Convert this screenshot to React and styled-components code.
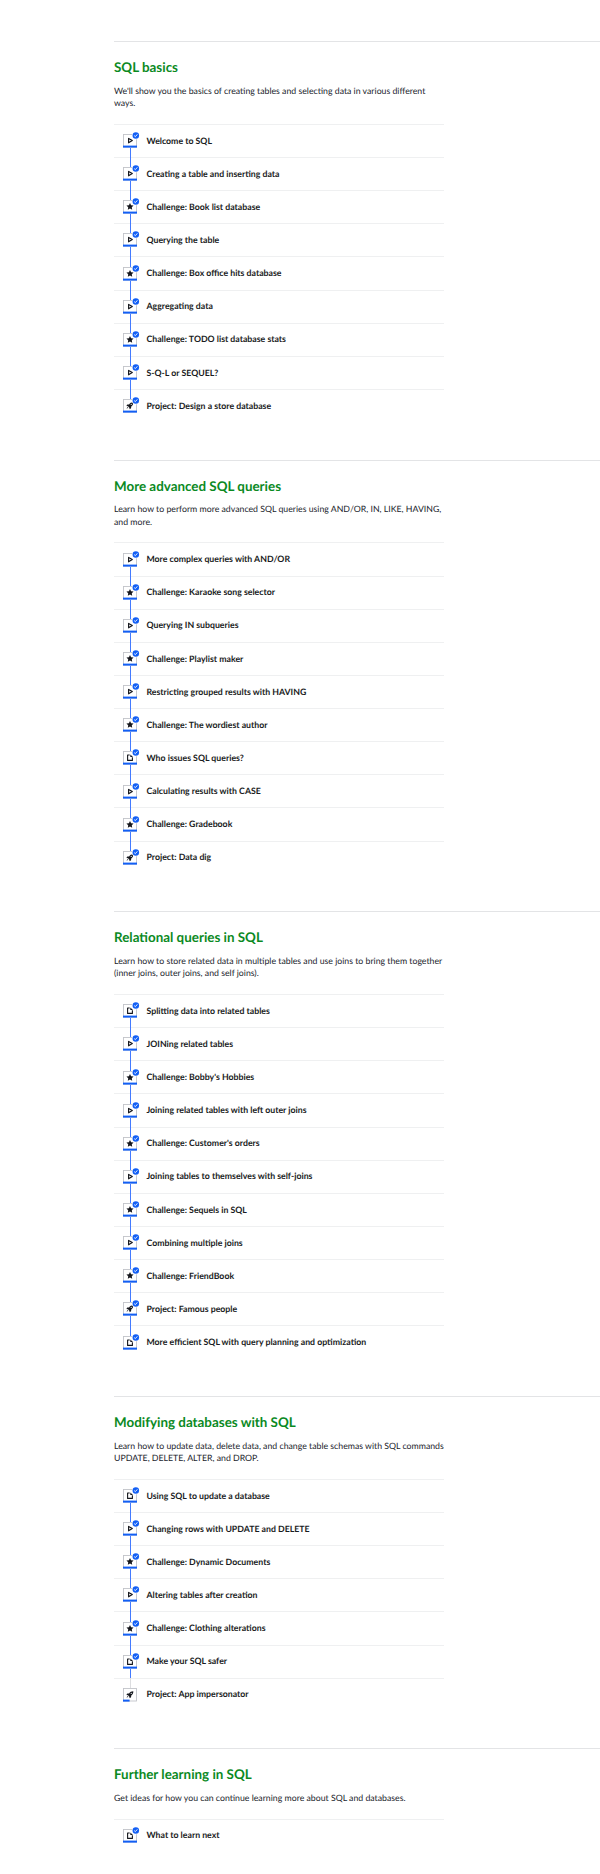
import React from 'react';
import styled, { createGlobalStyle } from 'styled-components';

const Global = createGlobalStyle`
  body {
    margin: 0;
    background: #fff;
    color: #21242c;
    font-family: Lato, 'Liberation Sans', sans-serif;
    text-rendering: geometricPrecision;
    overflow-x: hidden;
  }
`;

const Page = styled.main`
  padding: 41px 0 0 114px;
`;

const Unit = styled.section`
  box-sizing: border-box;
  border-top: 1px solid #e3e4e6;
  padding: 17px 0 37.5px;
`;

const UnitTitle = styled.h2`
  margin: 0;
  font-size: 13.4px;
  line-height: 16px;
  font-weight: 700;
  color: #0b8a1f;
`;

const Description = styled.p`
  box-sizing: border-box;
  width: 335px;
  margin: 0;
  padding: 9.6px 0 14px;
  font-size: 8.74px;
  line-height: 12.65px;
  white-space: pre-line;
`;

const Lessons = styled.ul`
  width: 330px;
  margin: 0;
  padding: 0;
  list-style: none;
`;

const Lesson = styled.li`
  box-sizing: border-box;
  display: flex;
  align-items: stretch;
  height: 33.13px;
  border-top: 1px solid #eff0f1;
  padding-left: 9.2px;
`;

const Track = styled.div`
  display: flex;
  flex-direction: column;
  align-items: center;
  width: 14px;
  margin-top: -1px;
`;

const Line = styled.span`
  width: 1px;
  flex: ${(p) => (p.$top ? '0 0 10.2px' : '1 1 0')};
  background: ${(p) => (p.$tone === 'done' ? '#437aff' : p.$tone === 'idle' ? '#dcdde0' : 'transparent')};
`;

const Tile = styled.svg`
  display: block;
  flex: none;
  width: 18px;
  height: 16px;
  margin: -2px 0 0 4px;
`;

const LessonName = styled.span`
  align-self: center;
  margin: -0.7px 0 0 9.3px;
  font-size: 8.74px;
  line-height: 12px;
  font-weight: 700;
  color: #191b22;
`;

const glyphs = {
  video: <path d="M5.600 6.400v4.400l3.700-2.200z" fill="none" stroke="#15171d" strokeWidth="1.15" strokeLinejoin="round" />,
  challenge: (
    <path
      d="M7 5l1.100 2.250 2.450.36-1.770 1.720.41 2.450L7 10.620l-2.190 1.160.41-2.450-1.770-1.720 2.450-.36z"
      fill="#15171d"
    />
  ),
  article: (
    <g fill="none" stroke="#15171d" strokeWidth="1.100">
      <path d="M6.700 6H4.600v5.400h4.800V8.300" strokeLinejoin="round" />
      <path d="M7.300 5.400l2.700 2.700H7.300z" fill="#15171d" stroke="none" />
    </g>
  ),
  project: (
    <g transform="translate(0 .3)">
      <path
        d="M10.300 4.900c-2.100 0-3.300.9-4.200 2.200l-1.800.2-.9 1.400 1.600.3 1.350 1.350.3 1.550 1.400-1.050.2-1.650C9.600 8.300 10.400 6.900 10.300 4.900z"
        fill="#15171d"
      />
      <path d="M4.600 9.700l-1.100 1.800 1.800-1.100z" fill="#15171d" />
      <circle cx="8.200" cy="7" r=".65" fill="#fff" />
    </g>
  ),
};

function LessonTile({ kind, done, partial }) {
  return (
    <Tile viewBox="0 0 18 16" aria-hidden="true">
      <rect x=".5" y="2.500" width="13" height="12.500" fill="#fff" stroke="#c2c4c9" strokeWidth=".9" />
      <rect x="0" y="13.600" width={partial ? 6.6 : 14} height="2" fill="#125ff5" />
      {glyphs[kind]}
      {done && (
        <g>
          <circle cx="12.800" cy="3.400" r="3.900" fill="#fff" />
          <circle cx="12.800" cy="3.400" r="3.250" fill="#125ff5" />
          <path d="M11.200 3.600l1.150 1.050 2-2.300" fill="none" stroke="#fff" strokeWidth=".9" />
        </g>
      )}
    </Tile>
  );
}

const V = 'video';
const C = 'challenge';
const A = 'article';
const P = 'project';

const units = [
  {
    title: 'SQL basics',
    text: "We'll show you the basics of creating tables and selecting data in various different\nways.",
    lessons: [
      [V, 'Welcome to SQL'],
      [V, 'Creating a table and inserting data'],
      [C, 'Challenge: Book list database'],
      [V, 'Querying the table'],
      [C, 'Challenge: Box office hits database'],
      [V, 'Aggregating data'],
      [C, 'Challenge: TODO list database stats'],
      [V, 'S-Q-L or SEQUEL?'],
      [P, 'Project: Design a store database'],
    ],
  },
  {
    title: 'More advanced SQL queries',
    text: 'Learn how to perform more advanced SQL queries using AND/OR, IN, LIKE, HAVING,\nand more.',
    lessons: [
      [V, 'More complex queries with AND/OR'],
      [C, 'Challenge: Karaoke song selector'],
      [V, 'Querying IN subqueries'],
      [C, 'Challenge: Playlist maker'],
      [V, 'Restricting grouped results with HAVING'],
      [C, 'Challenge: The wordiest author'],
      [A, 'Who issues SQL queries?'],
      [V, 'Calculating results with CASE'],
      [C, 'Challenge: Gradebook'],
      [P, 'Project: Data dig'],
    ],
  },
  {
    title: 'Relational queries in SQL',
    text: 'Learn how to store related data in multiple tables and use joins to bring them together\n(inner joins, outer joins, and self joins).',
    lessons: [
      [A, 'Splitting data into related tables'],
      [V, 'JOINing related tables'],
      [C, "Challenge: Bobby's Hobbies"],
      [V, 'Joining related tables with left outer joins'],
      [C, "Challenge: Customer's orders"],
      [V, 'Joining tables to themselves with self-joins'],
      [C, 'Challenge: Sequels in SQL'],
      [V, 'Combining multiple joins'],
      [C, 'Challenge: FriendBook'],
      [P, 'Project: Famous people'],
      [A, 'More efficient SQL with query planning and optimization'],
    ],
  },
  {
    title: 'Modifying databases with SQL',
    text: 'Learn how to update data, delete data, and change table schemas with SQL commands\nUPDATE, DELETE, ALTER, and DROP.',
    lessons: [
      [A, 'Using SQL to update a database'],
      [V, 'Changing rows with UPDATE and DELETE'],
      [C, 'Challenge: Dynamic Documents'],
      [V, 'Altering tables after creation'],
      [C, 'Challenge: Clothing alterations'],
      [A, 'Make your SQL safer'],
      [P, 'Project: App impersonator', true],
    ],
  },
  {
    title: 'Further learning in SQL',
    text: 'Get ideas for how you can continue learning more about SQL and databases.',
    lessons: [[A, 'What to learn next']],
  },
];

export default function App() {
  return (
    <>
      <Global />
      <Page>
        {units.map((unit) => (
          <Unit key={unit.title}>
            <UnitTitle>{unit.title}</UnitTitle>
            <Description>{unit.text}</Description>
            <Lessons>
              {unit.lessons.map(([kind, name, partial], i) => (
                <Lesson key={name}>
                  <Track>
                    <Line $top $tone={i === 0 ? 'none' : partial ? 'idle' : 'done'} />
                    <LessonTile kind={kind} done={!partial} partial={partial} />
                    <Line $tone={i === unit.lessons.length - 1 ? 'none' : 'done'} />
                  </Track>
                  <LessonName>{name}</LessonName>
                </Lesson>
              ))}
            </Lessons>
          </Unit>
        ))}
      </Page>
    </>
  );
}
